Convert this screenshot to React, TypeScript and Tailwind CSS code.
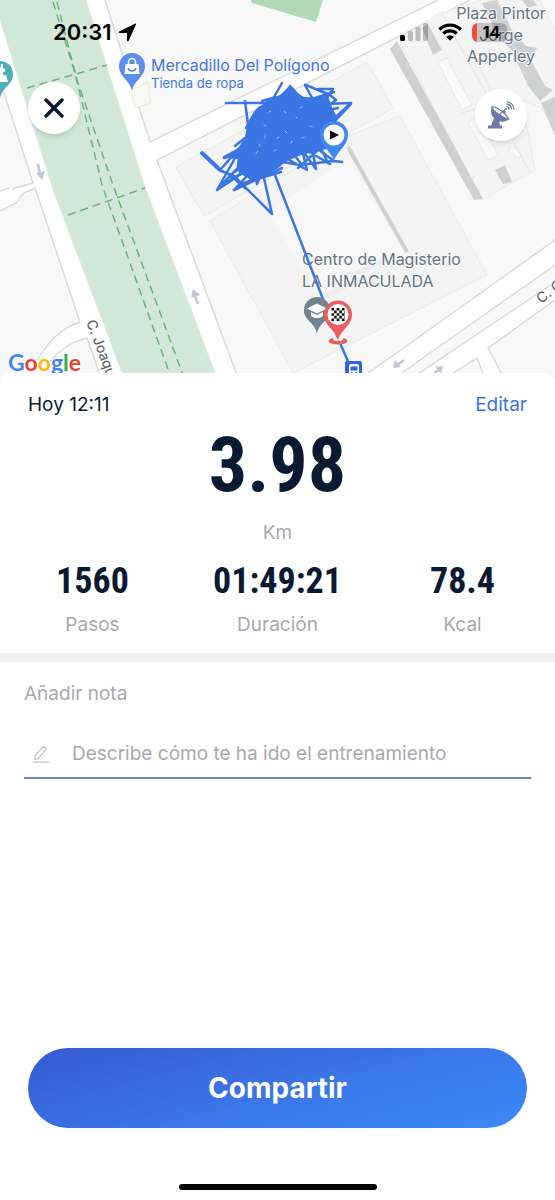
import React from 'react';

const stats = [
  { value: '1560', label: 'Pasos' },
  { value: '01:49:21', label: 'Duración' },
  { value: '78.4', label: 'Kcal' },
];

function Streets() {
  return (
    <g>
      <rect width="555" height="386" fill="#f8f8f9" />

      {/* park */}
      <path d="M0 0H86L145 187L220 386H127L53 190L0 20Z" fill="#d1e8d8" />
      <path d="M251 0L252 3L316 22L323 0Z" fill="#b1d9b8" />

      {/* avenues */}
      <path d="M0 20L53 190L127 386H104L87 338C72 343 62 350 46 366L34 360C48 340 60 330 80 322L35 189L17 196C14 205 8 207 0 211V192L12 188C18 188 24 189 33 184L0 84Z" fill="#fff" />
      <path d="M86 0H105L150 142L438 0H472L157 160L241 386H220L145 187Z" fill="#fff" />
      <path d="M350 386L555 240V265L383 386Z" fill="#fff" />
      <path d="M400 386L555 282V300L488 348L508 386H488L477 358L432 386Z" fill="#fff" />
      <g fill="none" stroke="#d9dadf" strokeWidth="1.5">
        <path d="M0 80L33 183L12 189M0 191L10 188M0 211L16 203C20 200 20 196 24 193L35 188L80 322C62 328 48 341 37 361M46 366C60 350 70 342 87 338L104 386" />
        <path d="M105 0L150 142L438 0M470 0L157 160L241 386" />
        <path d="M350 386L555 240M383 386L555 265M400 386L555 282M432 386L477 358L488 386M508 386L488 348L555 300" />
        <path d="M0 20L53 190L127 386M86 0L145 187L220 386" stroke="#e3e8ea" strokeWidth="1" />
      </g>

      {/* buildings */}
      <g fill="#f4f4f4" stroke="#eaeaeb" strokeWidth="1">
        <path d="M176 167L367 62L393 108L204 216Z" />
        <path d="M210 221L348 136L400 116L487 275L293 373Z" />
        <path d="M400 42L437 14L482 0H540L555 30V128L541 108L522 100L535 170L482 200Z" />
        <path d="M131 90L148 82L151 103L135 108Z" fill="#f8f8f5" stroke="#edebd9" />
      </g>
      <path d="M268 212L348 158L405 252L320 300Z" fill="#f8f8f8" />
      <path d="M325 296L350 284M350 276L382 261" stroke="#ececec" strokeWidth="5" />
      <g fill="#fafafa" stroke="#e9e9ea">
        <path d="M438 62L447 58L472 105L462 110Z" />
        <path d="M468 122L478 116L498 155L488 160Z" />
        <path d="M508 150L514 147L522 155L518 158Z" />
      </g>
      <path d="M441 12L530 172M475 58L500 108M462 113L478 108" stroke="#e4e4e5" fill="none" />
      <g fill="#cfd0d0">
        <path d="M390 49L397 41L483 199L474 200Z" />
        <path d="M422 28L428 24L442 50L433 55Z" />
        <path d="M482 3L497 0L512 30L526 46L537 48L531 60L545 86L553 90L540 101L528 86L517 62L521 58L500 40Z" />
        <path d="M541 103L555 97V136Z" />
        <path d="M495 170L505 165L512 182L503 184Z" />
        <path d="M522 0H533L537 5L528 8Z" />
      </g>
      <path d="M348 147L407 252" stroke="#cfd0d0" strokeWidth="4" />

      {/* footpaths */}
      <g fill="none" stroke="#6cb27a" strokeWidth="1.5" strokeDasharray="8 5">
        <path d="M53 2L75 73L102 185L174 386" />
        <path d="M57 2L68 45L77 80L113 185L187 386" />
        <path d="M27 88L107 65M68 215L145 188" />
      </g>

      {/* one-way arrows */}
      <g fill="none" stroke="#c3c7d4" strokeWidth="2.5">
        <path d="M38 164L40 174" />
        <path d="M198 304L195 296" />
        <path d="M404 360L397 365" />
        <path d="M434 373L440 369" />
      </g>
      <g fill="#c3c7d4">
        <path d="M36 173L45 171L42 180Z" />
        <path d="M191 298L200 295L193 289Z" />
        <path d="M393 368L395 360L401 367Z" />
        <path d="M443 366L435 367L441 374Z" />
      </g>
    </g>
  );
}

function Track() {
  return (
    <g stroke="#3976e3" strokeWidth="2.5" fill="none" strokeLinejoin="round" strokeLinecap="round">
      <path
        d="M248 128L257 110L268 102L282 95L290 87L297 94L303 98L316 99L327 97L331 108L336 118L328 130L325 148L312 151L300 154L286 160L276 168L262 176L250 178L240 172L238 166L239 158L230 157L240 148L246 138Z"
        fill="#3976e3"
      />
      <path d="M226 103L267 103M245 101L249 132M282 83L262 118L240 150M290 86L302 100L292 88L286 104" />
      <path d="M202 153L220 170L243 144L217 190L262 160L234 190L282 162L256 180L270 147" />
      <path d="M202 153L218 168" strokeWidth="4" />
      <path d="M224 157L252 142M219 170L234 176L272 214L264 178M240 184L281 172" />
      <path d="M306 85L330 95L336 100L320 112L305 85M318 89L333 89L322 104L351 103L326 126M351 104L334 122M333 110L312 99L334 92" />
      <path d="M260 158L300 165L334 161M282 168L260 178L234 190M286 158L307 170L302 150L316 169L311 144L334 161L342 162" />
      <path d="M247 170L220 186L250 156M262 172L257 184L252 160L230 175L245 188M292 152L302 165M306 150L330 164M320 146L328 163M318 150L298 168" />
      <path d="M255 112L246 128L260 107M264 104L276 97L262 101M235 146L245 138M224 158L240 154M322 98L318 112L338 108" />
      <path d="M275 175L340 343L350 366" />
      <g stroke="#a9c5f7" strokeWidth="1">
        <path d="M284 111L286 113M264 125L266 126M256 154L258 151M277 138L279 137M285 131L287 133M296 117L297 118M269 112L271 111M302 138L304 137M259 144L260 146M310 126L312 127M274 151L276 150M291 143L292 141M265 136L265 138M300 108L302 107" />
      </g>
    </g>
  );
}

function Pins() {
  return (
    <g>
      <path d="M132 91C130 80 119 77 119 66A13 13 0 0 1 145 66C145 77 134 80 132 91Z" fill="#5b8def" />
      <path d="M125.500 64H138.500L139.500 74H124.500Z" fill="#fff" />
      <path d="M128.500 64V62A3.500 3.500 0 0 1 135.500 62V64" fill="none" stroke="#fff" strokeWidth="1.500" />
      <path d="M128 68C129 72 135 72 136 68" fill="none" stroke="#5b8def" strokeWidth="1.500" />

      <path d="M0 99C-2 86 -13 86 -13 74A13 13 0 0 1 13 74C13 86 2 86 0 99Z" fill="#4fb0ba" />
      <path d="M0 67L5 69V72H3V75H6L8 82H0ZM1 64H3V68H1Z" fill="#fff" />

      <path d="M317 334C315 322 304 321 304 310A13 13 0 0 1 330 310C330 321 319 322 317 334Z" fill="#71838f" />
      <path d="M307 308.500L317 303.500L327 308.500L317 313.500Z" fill="#fff" />
      <path d="M311 312L317 315L323 312V316C319 319 315 319 311 316Z" fill="#fff" />

      <rect x="345" y="361" width="17" height="17" rx="2" fill="#2f66dc" />
      <rect x="349" y="364" width="10" height="13" rx="2" fill="#fff" />
      <rect x="350.500" y="366.500" width="7" height="4" fill="#2f66dc" />
      <path d="M351 372.500H352.500M355.500 372.500H357" stroke="#2f66dc" strokeWidth="1.500" />

      <path d="M334 161C332 152 320 146 320 135A14 14 0 0 1 348 135C348 146 336 152 334 161Z" fill="#4187f2" />
      <circle cx="334" cy="135" r="10.500" fill="#fff" />
      <path d="M330 130.500L339 135L330 139.500Z" fill="#0b0b0b" />

      <ellipse cx="338" cy="341" rx="9.500" ry="3.500" fill="#e95f60" />
      <ellipse cx="338" cy="339" rx="5" ry="2" fill="#f8f8f9" />
      <path d="M338 341C336 330 324 326 324 314.500A14 14 0 0 1 352 314.500C352 326 340 330 338 341Z" fill="#e95f60" />
      <circle cx="338" cy="314.500" r="10.500" fill="#fff" />
      <g fill="none" stroke="#111" strokeWidth="2.600">
        <path d="M331.500 309.300H345M331.500 314.500H345M331.500 319.700H345" strokeDasharray="2.600 2.600" />
        <path d="M334.100 311.900H345M334.100 317.100H345" strokeDasharray="2.600 2.600" />
      </g>
    </g>
  );
}

function MapLabels() {
  return (
    <g fontFamily="Inter, 'Liberation Sans', sans-serif" stroke="#f8f8f9" strokeWidth="2" strokeLinejoin="round" style={{ paintOrder: 'stroke' }}>
      <g fill="#4377e0">
        <text x="151" y="71" fontSize="16">Mercadillo Del Polígono</text>
        <text x="151" y="88" fontSize="13">Tienda de ropa</text>
      </g>
      <g fill="#647581" fontSize="16">
        <text x="501" y="19" textAnchor="middle">Plaza Pintor</text>
        <text x="501" y="41" textAnchor="middle">Jorge</text>
        <text x="501" y="62" textAnchor="middle">Apperley</text>
        <text x="302" y="265">Centro de Magisterio</text>
        <text x="302" y="287">LA INMACULADA</text>
      </g>
      <g fill="#56585c" fontSize="14">
        <text transform="translate(86 322) rotate(69)">C. Joaqu</text>
        <text transform="translate(541 304) rotate(-37)">C. C</text>
      </g>
      <text x="8" y="371" fontFamily="Lato, sans-serif" fontSize="23" fontWeight="700" stroke="#fff">
        <tspan fill="#4285f4">G</tspan>
        <tspan fill="#ea4335">o</tspan>
        <tspan fill="#fbbc05">o</tspan>
        <tspan fill="#4285f4">g</tspan>
        <tspan fill="#34a853">l</tspan>
        <tspan fill="#ea4335">e</tspan>
      </text>
    </g>
  );
}

function StatusBar() {
  return (
    <div className="absolute inset-x-0 top-0 flex items-center justify-between pt-4 pr-12 pl-[53px] text-black">
      <div className="flex items-center gap-1.5">
        <span className="text-[22px] leading-8 font-semibold">20:31</span>
        <svg className="size-[19px]" viewBox="0 0 18 18" aria-hidden="true">
          <path d="M17 1.500Q17.500 0 16 .8L1 8Q0 9 1.500 9.500H8.500V16.500Q9 18 10 17Z" fill="#000" />
        </svg>
      </div>
      <div className="flex items-center gap-2.5">
        <svg className="h-[18px] w-7" viewBox="0 0 28 18" aria-hidden="true">
          <rect x="0" y="12" width="5" height="6" rx="1.500" fill="#000" />
          <g fill="#000" opacity=".22">
            <rect x="8" y="8" width="5" height="10" rx="1.500" />
            <rect x="15.500" y="4" width="5" height="14" rx="1.500" />
            <rect x="23" y="0" width="5" height="18" rx="1.500" />
          </g>
        </svg>
        <svg className="h-[18px] w-6" viewBox="0 0 24 18" aria-hidden="true">
          <g fill="none" stroke="#000" strokeWidth="3.200">
            <path d="M1.300 6.500A15.300 15.300 0 0 1 22.700 6.500" />
            <path d="M5.300 10.600A9.600 9.600 0 0 1 18.700 10.600" />
          </g>
          <path d="M8.200 13.700A5.400 5.400 0 0 1 15.800 13.700L12 17.700Z" fill="#000" />
        </svg>
        <div className="flex h-[19px] w-[35px] items-center justify-center overflow-hidden rounded-md bg-[linear-gradient(90deg,#ee4b3c_5px,rgb(0_0_0/0.2)_5px)] pl-1">
          <span className="text-base font-bold">14</span>
        </div>
      </div>
    </div>
  );
}

function DishIcon() {
  return (
    <svg className="size-7" viewBox="0 0 28 28" aria-hidden="true">
      <g fill="#6b7ba8">
        <path d="M5 6C2 12 6 19 13 20.500C17 21.500 20.500 20 21.500 18Z" />
        <path d="M7 17L4 24.500H1V27.500H15V24.500H13L12 19Z" />
        <circle cx="17" cy="11" r="1.600" />
      </g>
      <path d="M5 6C9 5 20 13 21.500 18C18 18 6 11 5 6Z" fill="#fff" stroke="#6b7ba8" strokeWidth="1.300" />
      <g fill="none" stroke="#6b7ba8" strokeWidth="1.300" strokeLinecap="round">
        <path d="M12 14L19.500 7.500" />
        <path d="M20 5.500A3.500 3.500 0 0 1 22 8" />
        <path d="M20 3A6 6 0 0 1 24.500 8" />
        <path d="M20 .8A8 8 0 0 1 27 8" />
      </g>
    </svg>
  );
}

export default function App() {
  return (
    <div className="flex min-h-screen flex-col bg-white font-['Inter','Liberation_Sans',sans-serif] text-[#0b1a33]">
      <header className="relative">
        <svg className="block h-auto w-full" viewBox="0 0 555 386" role="img" aria-label="Mapa del recorrido">
          <Streets />
          <MapLabels />
          <Track />
          <Pins />
        </svg>
        <StatusBar />
        <button
          type="button"
          aria-label="Cerrar"
          className="absolute top-[82px] left-7 flex size-[52px] items-center justify-center rounded-full bg-white shadow-md"
        >
          <svg className="size-5" viewBox="0 0 20 20" aria-hidden="true">
            <path d="M2 2L18 18M18 2L2 18" stroke="#0b1a33" strokeWidth="3.500" strokeLinecap="round" />
          </svg>
        </button>
        <button
          type="button"
          aria-label="Señal GPS"
          className="absolute top-[89px] right-7 flex size-[52px] items-center justify-center rounded-full bg-white shadow-md"
        >
          <DishIcon />
        </button>
      </header>

      <main className="relative -mt-[13px] flex grow flex-col rounded-t-xl bg-white">
        <section className="pt-5 pb-4">
          <div className="flex items-center justify-between px-7 text-[19px] leading-6">
            <time>Hoy 12:11</time>
            <button type="button" className="text-[#3d73e0]">Editar</button>
          </div>
          <p className="mt-2 text-center font-['Roboto_Condensed','Liberation_Sans_Narrow',sans-serif] text-[76px] leading-[80px] font-bold">
            3.98
          </p>
          <p className="mt-4 text-center text-[19px] leading-6 text-[#a7a9ae]">Km</p>
          <dl className="mt-4 grid grid-cols-3 text-center">
            {stats.map((stat) => (
              <div key={stat.label} className="flex flex-col-reverse gap-3">
                <dt className="text-[19px] leading-6 text-[#a7a9ae]">{stat.label}</dt>
                <dd className="font-['Roboto_Condensed','Liberation_Sans_Narrow',sans-serif] text-[36px] leading-10 font-bold">
                  {stat.value}
                </dd>
              </div>
            ))}
          </dl>
        </section>

        <div className="h-[9px] bg-[#f0f1f4]" />

        <section className="px-6 pt-5">
          <label htmlFor="note" className="block text-[19px] leading-6 text-[#a7a9ae]">Añadir nota</label>
          <div className="mt-6 flex h-[49px] items-center gap-[22px] border-b-2 border-[#5b86d3] pl-2">
            <svg className="size-[18px] shrink-0" viewBox="0 0 18 20" fill="none" stroke="#c4c6ca" strokeWidth="1.500" aria-hidden="true">
              <path d="M2 16L2.500 11.500L11.500 1.500L15 4.500L6 15Z" strokeLinejoin="round" />
              <path d="M0 19H18" />
            </svg>
            <input
              id="note"
              type="text"
              placeholder="Describe cómo te ha ido el entrenamiento"
              className="min-w-0 grow bg-transparent text-[19px] leading-6 outline-none placeholder:text-[#a7a9ae]"
            />
          </div>
        </section>

        <footer className="mt-auto px-7 pb-2.5">
          <button
            type="button"
            className="h-20 w-full rounded-full bg-[linear-gradient(165deg,#385cd3_5%,#3a77e9_55%,#3c87f7_95%)] text-[28px] font-bold text-white"
          >
            Compartir
          </button>
          <div className="mx-auto mt-14 h-1.5 w-[198px] rounded-full bg-black" />
        </footer>
      </main>
    </div>
  );
}
